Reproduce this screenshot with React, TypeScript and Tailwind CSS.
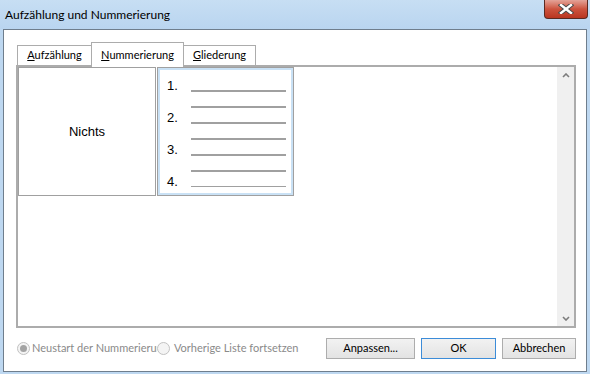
const ui = { fontFamily: 'Lato, "Noto Sans", sans-serif' };
const arial = { fontFamily: '"Liberation Sans", Arial, sans-serif' };

const CloseIcon = () => (
  <svg width="16" height="10" viewBox="0 0 16 10">
    <path d="M3 1 L13 9 M13 1 L3 9" stroke="#4a4a4a" strokeWidth="4.4" strokeLinecap="square" />
    <path d="M3 1 L13 9 M13 1 L3 9" stroke="#ffffff" strokeWidth="2.4" strokeLinecap="square" />
  </svg>
);

const Chevron = ({ up }: { up?: boolean }) => (
  <svg width="8" height="5" viewBox="0 0 8 5">
    <path d={up ? 'M1 4 L4 1 L7 4' : 'M1 1 L4 4 L7 1'} stroke="#7c7c7c" strokeWidth="1.6" fill="none" />
  </svg>
);

const Radio = ({ checked }: { checked?: boolean }) => (
  <span className="w-[13px] h-[13px] shrink-0 rounded-full border border-[#c2c2c2] bg-[#f4f4f4] flex items-center justify-center">
    {checked ? <span className="w-[7px] h-[7px] rounded-full bg-[#a3a3a3]" /> : null}
  </span>
);

const NumberPreview = () => {
  const rows = ['1.', '', '2.', '', '3.', '', '4.'];
  return (
    <div className="flex flex-col pt-[6px] pl-[7px]">
      {rows.map((n, i) => (
        <div key={i} className="h-4 flex items-end">
          <span className="w-6 text-[13px] leading-[13px] text-black" style={arial}>
            {n}
          </span>
          <span className={`w-[95px] bg-[#a0a0a0] ${i === 6 ? 'h-px mb-px' : 'h-[2px]'}`} />
        </div>
      ))}
    </div>
  );
};

export default function App() {
  return (
    <div className="w-[590px] h-[374px] bg-[#bed8f1] flex flex-col overflow-hidden" style={ui}>
      {/* title bar */}
      <div className="h-[29px] shrink-0 flex items-start bg-gradient-to-b from-[#c7def3] to-[#b9d5f0]">
        <span className="pl-[5px] pt-[7px] text-[12px] leading-[16px] text-black">Aufzählung und Nummerierung</span>
        <div className="ml-auto mr-[2px] w-[44px] h-[19px] rounded-b-[4px] border border-t-0 border-[#5a2a22] bg-gradient-to-b from-[#e3a398] via-[#cc533e] to-[#b93520] flex items-center justify-center">
          <CloseIcon />
        </div>
      </div>

      {/* client area */}
      <div className="flex-1 mx-[3px] mb-[2px] border border-[#6f7e8d] bg-white flex flex-col">
        {/* tabs */}
        <div className="flex items-end h-[23px] mt-3 ml-[13px] text-[11px] text-black">
          <div className="w-[75px] h-[20px] border border-b-0 border-[#acacac] flex items-center justify-center">
            <span>
              <u>A</u>ufzählung
            </span>
          </div>
          <div className="relative z-10 -ml-px w-[93px] h-[25px] -mb-[2px] border border-b-0 border-[#acacac] bg-white flex items-start justify-center pt-[4px]">
            <span>
              <u>N</u>ummerierung
            </span>
          </div>
          <div className="-ml-px w-[73px] h-[20px] border border-b-0 border-[#acacac] flex items-center justify-center">
            <span>
              <u>G</u>liederung
            </span>
          </div>
        </div>

        {/* panel */}
        <div className="ml-3 mr-[10px] h-[263px] border-2 border-[#acacac] flex">
          <div className="flex-1 flex items-start">
            <div className="w-[138px] h-[129px] border border-[#a0a0a0] flex items-center justify-center text-[13px] text-black" style={arial}>
              Nichts
            </div>
            <div className="ml-px w-[137px] h-[129px] border border-[#a0a0a0]">
              <div className="w-full h-full border-2 border-[#c9e1f5]">
                <NumberPreview />
              </div>
            </div>
          </div>
          <div className="w-[17px] bg-[#f0f0f0] flex flex-col items-center justify-between pt-[6px] pb-[5px]">
            <Chevron up />
            <Chevron />
          </div>
        </div>

        {/* bottom row */}
        <div className="flex items-start mt-[10px] ml-[13px] mr-[10px] text-[11px]">
          <div className="flex items-center h-[21px] text-[#8a8a8a]">
            <Radio checked />
            <span className="ml-[2px] w-[125px] overflow-hidden whitespace-nowrap">Neustart der Nummerierung</span>
            <Radio />
            <span className="ml-[4px] whitespace-nowrap">Vorherige Liste fortsetzen</span>
          </div>
          <div className="ml-auto flex gap-[6px] text-black">
            <div className="w-[89px] h-[21px] border border-[#adadad] bg-gradient-to-b from-[#f2f2f2] to-[#e3e3e3] flex items-center justify-center">
              Anpassen...
            </div>
            <div className="w-[75px] h-[21px] border border-[#3c8cd8] bg-gradient-to-b from-[#f2f2f2] to-[#e3e3e3] flex items-center justify-center">
              OK
            </div>
            <div className="w-[74px] h-[21px] border border-[#adadad] bg-gradient-to-b from-[#f2f2f2] to-[#e3e3e3] flex items-center justify-center">
              Abbrechen
            </div>
          </div>
        </div>
      </div>
    </div>
  );
}
